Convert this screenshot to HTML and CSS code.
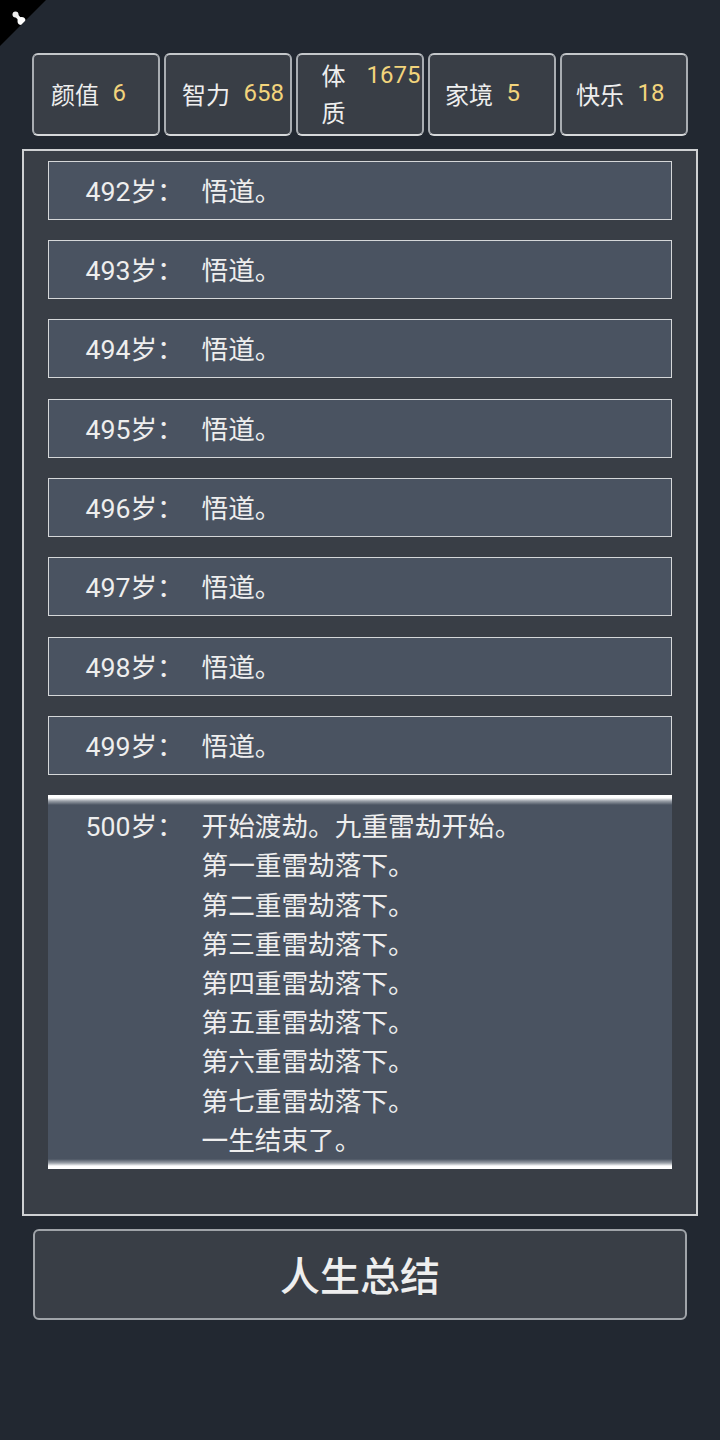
FILE: index.html
```html
<!doctype html>
<html>
  <head>
    <title>人生重开模拟器</title>
    <link rel="stylesheet" href="styles.css">
  </head>
  <body>
    <div class="corner">
      <svg class="corner-icon" width="30" height="30" viewBox="0 0 30 30">
        <path d="M15.5 14.5 L21.5 21" stroke="#f4f4f4" stroke-width="3.4"/>
        <circle cx="15.5" cy="14.5" r="3" fill="#ececec"/>
        <circle cx="21.5" cy="21" r="4" fill="#fff"/>
      </svg>
    </div>

    <div class="stats">
      <div class="stat"><span class="stat-label">颜值</span><span class="stat-value">6</span></div>
      <div class="stat"><span class="stat-label">智力</span><span class="stat-value">658</span></div>
      <div class="stat stat-wrap"><span class="stat-label">体质</span><span class="stat-value">1675</span></div>
      <div class="stat"><span class="stat-label">家境</span><span class="stat-value">5</span></div>
      <div class="stat"><span class="stat-label">快乐</span><span class="stat-value">18</span></div>
    </div>

    <div class="panel">
      <ul class="log">
        <li class="log-item"><span class="age">492岁：</span><span class="event">悟道。</span></li>
        <li class="log-item"><span class="age">493岁：</span><span class="event">悟道。</span></li>
        <li class="log-item"><span class="age">494岁：</span><span class="event">悟道。</span></li>
        <li class="log-item"><span class="age">495岁：</span><span class="event">悟道。</span></li>
        <li class="log-item"><span class="age">496岁：</span><span class="event">悟道。</span></li>
        <li class="log-item"><span class="age">497岁：</span><span class="event">悟道。</span></li>
        <li class="log-item"><span class="age">498岁：</span><span class="event">悟道。</span></li>
        <li class="log-item"><span class="age">499岁：</span><span class="event">悟道。</span></li>
        <li class="log-item log-item-last">
          <span class="age">500岁：</span>
          <span class="event">
            开始渡劫。九重雷劫开始。<br>
            第一重雷劫落下。<br>
            第二重雷劫落下。<br>
            第三重雷劫落下。<br>
            第四重雷劫落下。<br>
            第五重雷劫落下。<br>
            第六重雷劫落下。<br>
            第七重雷劫落下。<br>
            一生结束了。
          </span>
        </li>
      </ul>
    </div>

    <button class="summary">人生总结</button>
  </body>
</html>
```

FILE: styles.css
```css
* {
  box-sizing: border-box;
  margin: 0;
  padding: 0;
}

html,
body {
  height: 100%;
  overflow: hidden;
}

body {
  font-family: Roboto, 'Noto Sans CJK SC', sans-serif;
  background: #222831;
  color: #eeeeee;
  padding-top: 53px;
}

/* debug badge in the top left corner */
.corner {
  position: absolute;
  top: 0;
  left: 0;
  width: 46px;
  height: 46px;
  background: #000;
  clip-path: polygon(0 0, 100% 0, 0 100%);
}
.corner-icon {
  position: absolute;
  top: 0;
  left: 0;
}

.stats {
  display: flex;
  gap: 4.5px;
  margin: 0 32px;
}

.stat {
  flex: none;
  width: 127.5px;
  height: 83px;
  display: flex;
  align-items: center;
  gap: 13.5px;
  padding: 0 0 2px 17px;
  background: #393e46;
  border: 2px solid #a9adb2;
  border-top-color: #c4c7ca;
  border-bottom-color: #d6d8da;
  border-radius: 6px;
  font-size: 24px;
}
.stat:nth-child(2) {
  padding-left: 16px;
}
.stat:nth-child(4) {
  padding-left: 15px;
}
.stat:nth-child(5) {
  padding-left: 14px;
}
.stat-label {
  white-space: nowrap;
}
.stat-value {
  color: #f2d47c;
  margin-bottom: 2px;
}
.stat-wrap {
  padding: 2px 0 0 23.5px;
  gap: 21px;
  line-height: 37px;
}
.stat-wrap .stat-label {
  width: 24px;
  white-space: normal;
}
.stat-wrap .stat-value {
  align-self: flex-start;
  margin: 0;
}

.panel {
  height: 1067px;
  margin: 13px 22px;
  padding: 9.5px 24px 0;
  background: #393e46;
  border: 2px solid #cfd1d3;
}

.log {
  list-style: none;
}

.log-item {
  display: flex;
  min-height: 59px;
  margin-bottom: 20.35px;
  padding: 11px 0 6px 36.5px;
  background: #4a5361;
  border: 1px solid #d5d7d9;
  font-size: 26.67px;
  line-height: 39.2px;
}
.log-item-last {
  margin-bottom: 0;
  border: none;
  background: linear-gradient(
    #fff 3px,
    #9aa0a8 6px,
    #4a5361 10px,
    #4a5361 calc(100% - 10px),
    #9aa0a8 calc(100% - 6px),
    #fff calc(100% - 3px)
  );
  padding: 13px 0 8px 37.5px;
}

.age {
  flex: none;
  width: 116px;
}

.summary {
  display: block;
  width: 654px;
  height: 91px;
  margin: 0 33px;
  padding-bottom: 2px;
  background: #393e46;
  color: #eeeeee;
  border: 2px solid #a0a4a9;
  border-radius: 6px;
  font-family: inherit;
  font-size: 40px;
  font-weight: 500;
}
```
